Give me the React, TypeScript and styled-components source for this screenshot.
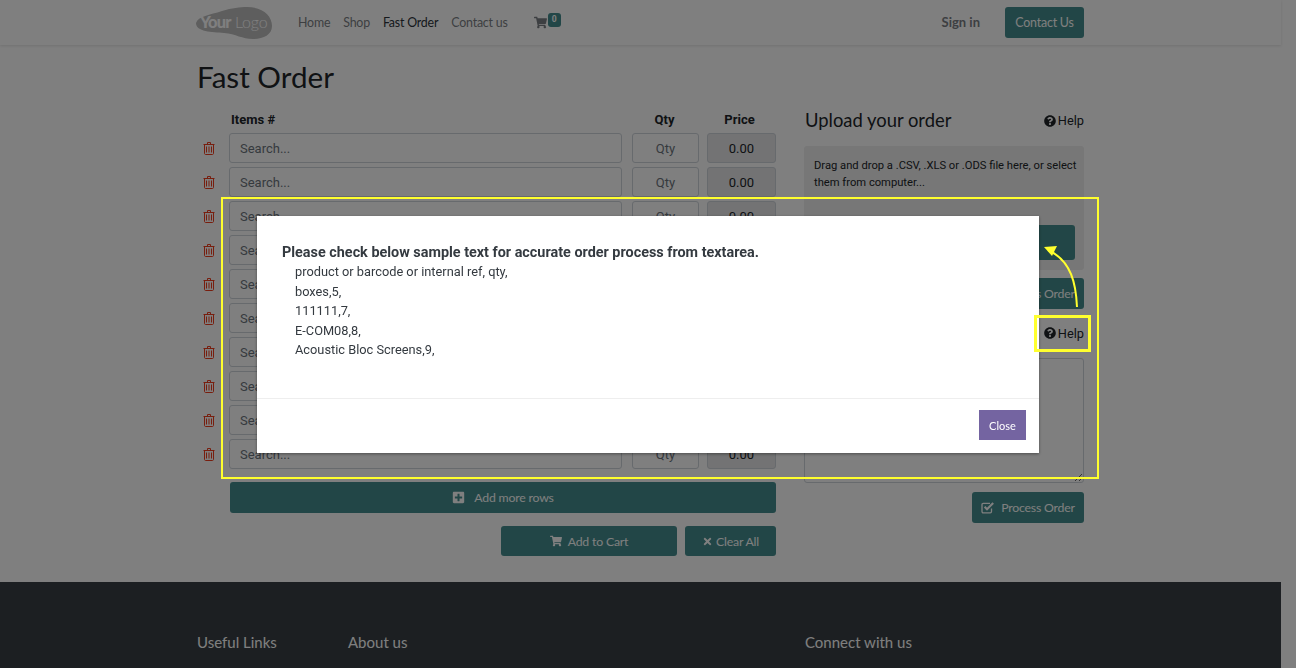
import React from "react";
import styled, { createGlobalStyle } from "styled-components";
import { FaQuestionCircle, FaPlusSquare, FaShoppingCart, FaTimes } from "react-icons/fa";

const HEAD_FONT = `"Lato", "Open Sans", sans-serif`;
const BODY_FONT = `"Roboto", "Liberation Sans", sans-serif`;
const TEAL = "#458d8e";

const rows = Array.from({ length: 10 }, (_, i) => i);

export default function App() {
  return (
    <>
      <GlobalStyle />
      <Page>
        <Header>
          <Container>
            <HeaderInner>
              <Logo />
              <NavLinks>
                <NavLink>Home</NavLink>
                <NavLink>Shop</NavLink>
                <NavLink $active>Fast Order</NavLink>
                <NavLink>Contact us</NavLink>
              </NavLinks>
              <CartLink>
                <FaShoppingCart size={13} />
                <CartBadge>0</CartBadge>
              </CartLink>
              <SignIn>Sign in</SignIn>
              <ContactButton>Contact Us</ContactButton>
            </HeaderInner>
          </Container>
        </Header>

        <Container>
          <Title>Fast Order</Title>
          <Columns>
            <section>
              <ItemHead>
                <span />
                <ColumnLabel $indent>Items #</ColumnLabel>
                <ColumnLabel $shift={1}>Qty</ColumnLabel>
                <ColumnLabel $shift={3}>Price</ColumnLabel>
              </ItemHead>
              {rows.map((r) => (
                <ItemRow key={r}>
                  <TrashIcon />
                  <Field placeholder="Search..." />
                  <Field $center placeholder="Qty" />
                  <PriceField readOnly value="0.00" />
                </ItemRow>
              ))}
              <AddRows>
                <FaPlusSquare size={13} />
                Add more rows
              </AddRows>
              <ActionRow>
                <TealButton $width={176} $height={30}>
                  <FaShoppingCart size={12} />
                  Add to Cart
                </TealButton>
                <TealButton $width={91} $height={30} $gap={3}>
                  <FaTimes size={11} />
                  Clear All
                </TealButton>
              </ActionRow>
            </section>

            <section>
              <SideHeading>
                <SideTitle>Upload your order</SideTitle>
                <HelpLink>
                  <FaQuestionCircle size={12} />
                  Help
                </HelpLink>
              </SideHeading>
              <DropBox>
                Drag and drop a .CSV, .XLS or .ODS file here, or select them from computer...
                <DropButton />
              </DropBox>
              <RightAlign $top={8}>
                <TealButton $width={112} $height={31}>
                  <CheckIcon />
                  Process Order
                </TealButton>
              </RightAlign>
              <HelpRow>
                <HelpLink>
                  <FaQuestionCircle size={12} />
                  Help
                </HelpLink>
              </HelpRow>
              <OrderText />
              <RightAlign $top={9}>
                <TealButton $width={112} $height={31}>
                  <CheckIcon />
                  Process Order
                </TealButton>
              </RightAlign>
            </section>
          </Columns>
        </Container>

        <Footer>
          <Container>
            <FooterGrid>
              <FooterHeading>Useful Links</FooterHeading>
              <FooterHeading>About us</FooterHeading>
              <FooterHeading>Connect with us</FooterHeading>
            </FooterGrid>
          </Container>
        </Footer>
      </Page>

      <Backdrop />

      <Modal>
        <ModalBody>
          <ModalHeading>Please check below sample text for accurate order process from textarea.</ModalHeading>
          <SampleLines>
            <div>product or barcode or internal ref, qty,</div>
            <div>boxes,5,</div>
            <div>111111,7,</div>
            <div>E-COM08,8,</div>
            <div>Acoustic Bloc Screens,9,</div>
          </SampleLines>
        </ModalBody>
        <ModalFooter>
          <CloseButton>Close</CloseButton>
        </ModalFooter>
      </Modal>

      <HighlightBox />
      <HelpHighlight />
      <Arrow width="40" height="66" viewBox="0 0 40 66" fill="none">
        <path d="M33 62C32 40 28 16 4 5" stroke="#ffff2e" strokeWidth="2" />
        <path d="M0 2L13 1L8 11Z" fill="#ffff2e" />
      </Arrow>
    </>
  );
}

function Logo() {
  return (
    <LogoSvg width="78" height="34" viewBox="0 0 78 34">
      <path
        d="M0 17C2 10 14 9 26 5C36 2 44 1 51 1C66 1 76 9 76 20C76 29 67 33 57 33C46 33 40 28 28 27C16 26 0 26 0 17Z"
        fill="#bcbcbc"
      />
      <text x="4" y="22" fontFamily={HEAD_FONT} fontSize="16.5" fontWeight="900" fill="#fff" letterSpacing="-0.9">
        Your
      </text>
      <text x="39" y="22" fontFamily={HEAD_FONT} fontSize="16" fontWeight="300" fill="#fff" letterSpacing="-0.2">
        Logo
      </text>
    </LogoSvg>
  );
}

function TrashIcon() {
  return (
    <TrashSvg width="12" height="13" viewBox="0 0 12 13" fill="none" stroke="#f03c1c">
      <path d="M0.5 2.5H11.5M4.5 2.5V0.5H7.5V2.5M1.5 2.5V11.5C1.5 12 2 12.5 2.5 12.5H9.5C10 12.5 10.5 12 10.5 11.5V2.5" />
      <path d="M3.5 4.5V10.5M6 4.5V10.5M8.5 4.5V10.5" />
    </TrashSvg>
  );
}

function CheckIcon() {
  return (
    <svg width="14" height="13" viewBox="0 0 14 13" fill="none" stroke="currentColor">
      <path d="M10.5 7.5V10.5C10.5 11.3 10 11.8 9.2 11.8H2.3C1.5 11.8 1 11.3 1 10.5V3.6C1 2.8 1.5 2.3 2.3 2.3H9" strokeWidth="1.3" />
      <path d="M3.6 5.8L6 8.2L12.2 2" strokeWidth="2.1" />
    </svg>
  );
}

const GlobalStyle = createGlobalStyle`
  html, body {
    margin: 0;
    height: 100%;
    overflow: hidden;
    background: #fff;
  }
  body {
    font-family: ${BODY_FONT};
    font-size: 13px;
    color: #212529;
  }
  * {
    box-sizing: border-box;
  }
`;

const Page = styled.div`
  width: 1281px;
`;

const Container = styled.div`
  width: 917px;
  margin: 0 auto;
  padding: 0 15px;
`;

const Header = styled.header`
  height: 45px;
  background: #fff;
  box-shadow: 0 1px 3px rgba(0, 0, 0, 0.12);
`;

const HeaderInner = styled.div`
  height: 45px;
  display: flex;
  align-items: center;
  font-family: ${HEAD_FONT};
  font-size: 12.4px;
  letter-spacing: -0.2px;
`;

const LogoSvg = styled.svg`
  flex: none;
  margin-left: -1px;
`;

const NavLinks = styled.nav`
  display: flex;
  gap: 13px;
  margin-left: 24px;
`;

const NavLink = styled.a<{ $active?: boolean }>`
  color: ${({ $active }) => ($active ? "#2c333a" : "#7b7f84")};
  white-space: nowrap;
`;

const CartLink = styled.a`
  position: relative;
  display: flex;
  margin-left: 26px;
  color: #7b7f84;
`;

const CartBadge = styled.span`
  position: absolute;
  left: 14px;
  top: -3px;
  width: 13px;
  height: 14px;
  border-radius: 3px;
  background: ${TEAL};
  color: #fff;
  font-family: ${BODY_FONT};
  font-size: 8.5px;
  font-weight: 700;
  letter-spacing: 0;
  line-height: 13px;
  text-align: center;
`;

const SignIn = styled.a`
  margin-left: auto;
  margin-bottom: 1px;
  color: #7b7f84;
  font-size: 13px;
  font-weight: 700;
  letter-spacing: 0;
`;

const ContactButton = styled.a`
  width: 79px;
  height: 31px;
  margin-left: 25px;
  border-radius: 3px;
  background: ${TEAL};
  color: #fff;
  line-height: 31px;
  text-align: center;
`;

const Title = styled.h1`
  margin: 12px 0 13px;
  font-family: ${HEAD_FONT};
  font-size: 29.6px;
  font-weight: 400;
  line-height: 40px;
  color: #212529;
`;

const Columns = styled.div`
  display: grid;
  grid-template-columns: 579px 280px;
  column-gap: 28px;
  padding-bottom: 26px;
`;

const ItemRow = styled.div`
  display: grid;
  grid-template-columns: 32px 393px 77px 77px;
  align-items: center;
  height: 34px;
  padding-bottom: 4px;
`;

const ItemHead = styled(ItemRow)`
  height: 23px;
`;

const ColumnLabel = styled.div<{ $indent?: boolean; $shift?: number }>`
  justify-self: ${({ $indent }) => ($indent ? "start" : "end")};
  width: ${({ $indent }) => ($indent ? "auto" : "67px")};
  margin-right: ${({ $shift }) => $shift ?? 0}px;
  padding-left: ${({ $indent }) => ($indent ? "2px" : "0")};
  font-size: 13px;
  font-weight: 700;
  text-align: center;
`;

const TrashSvg = styled.svg`
  margin-left: 6px;
`;

const Field = styled.input<{ $center?: boolean }>`
  justify-self: end;
  height: 30px;
  width: ${({ $center }) => ($center ? "67px" : "100%")};
  padding: 0 10px;
  border: 1px solid #ced4da;
  border-radius: 3px;
  background: #fff;
  font-family: ${BODY_FONT};
  font-size: 13px;
  color: #495057;
  text-align: ${({ $center }) => ($center ? "center" : "left")};
  outline: none;

  &::placeholder {
    color: #6c757d;
    opacity: 1;
  }
`;

const PriceField = styled.input`
  justify-self: end;
  height: 30px;
  width: 69px;
  border: 1px solid #ced4da;
  border-radius: 3px;
  background: #e6e7e8;
  font-family: ${BODY_FONT};
  font-size: 13px;
  color: #212529;
  text-align: center;
  outline: none;
`;

const TealButton = styled.button<{ $width: number; $height: number; $gap?: number }>`
  display: inline-flex;
  align-items: center;
  justify-content: center;
  gap: ${({ $gap }) => $gap ?? 6}px;
  width: ${({ $width }) => $width}px;
  height: ${({ $height }) => $height}px;
  padding: 0;
  border: none;
  border-radius: 3px;
  background: ${TEAL};
  color: #fff;
  font-family: ${HEAD_FONT};
  font-size: 12.3px;
  letter-spacing: -0.2px;
`;

const AddRows = styled(TealButton).attrs({ $width: 546, $height: 31, $gap: 9 })`
  display: flex;
  margin: 9px 0 0 33px;
`;

const ActionRow = styled.div`
  display: flex;
  justify-content: flex-end;
  gap: 8px;
  margin-top: 13px;
`;

const SideHeading = styled.div`
  display: flex;
  align-items: center;
  justify-content: space-between;
  height: 26px;
  margin: -3px 0 13px 1px;
`;

const SideTitle = styled.h3`
  margin: 0;
  font-family: ${HEAD_FONT};
  font-size: 18.4px;
  font-weight: 400;
  color: #212529;
`;

const HelpLink = styled.a`
  display: inline-flex;
  align-items: center;
  gap: 2px;
  padding-top: 1px;
  font-size: 12.8px;
  color: #212529;
`;

const DropBox = styled.div`
  display: flex;
  flex-direction: column;
  height: 124px;
  padding: 11px 0 10px 10px;
  border-radius: 3px;
  background: #eeeeee;
  font-size: 11.2px;
  line-height: 17px;
  color: #212529;
`;

const DropButton = styled.div`
  height: 35px;
  margin: 34px 9px 0 0;
  border-radius: 3px;
  background: ${TEAL};
`;

const RightAlign = styled.div<{ $top: number }>`
  display: flex;
  justify-content: flex-end;
  margin-top: ${({ $top }) => $top}px;
`;

const HelpRow = styled.div`
  display: flex;
  justify-content: flex-end;
  align-items: center;
  height: 49px;
  padding-bottom: 2px;
`;

const OrderText = styled.textarea`
  display: block;
  width: 100%;
  height: 125px;
  margin: 0;
  border: 1px solid #ced4da;
  border-radius: 3px;
  background: #fff;
  resize: vertical;
`;

const Footer = styled.footer`
  height: 200px;
  background: #383f44;
`;

const FooterGrid = styled.div`
  display: grid;
  grid-template-columns: 151px 457px 1fr;
  padding-top: 50px;
`;

const FooterHeading = styled.h5`
  margin: 0;
  font-family: ${HEAD_FONT};
  font-size: 15px;
  font-weight: 400;
  line-height: 20px;
  color: #fff;
`;

const Backdrop = styled.div`
  position: fixed;
  inset: 0;
  background: rgba(0, 0, 0, 0.5);
`;

const HighlightBox = styled.div`
  position: fixed;
  left: 221px;
  top: 197px;
  width: 878px;
  height: 282px;
  border: 2px solid #ffff2e;
`;

const HelpHighlight = styled.div`
  position: fixed;
  left: 1034px;
  top: 315px;
  width: 57px;
  height: 37px;
  border: 3px solid #ffff2e;
`;

const Modal = styled.div`
  position: fixed;
  left: 257px;
  top: 216px;
  width: 782px;
  height: 237px;
  display: flex;
  flex-direction: column;
  background: #fff;
  box-shadow: 0 1px 3px rgba(0, 0, 0, 0.4);
`;

const ModalBody = styled.div`
  flex: 1;
  padding: 28px 25px 0;
  border-bottom: 1px solid #eeeeee;
`;

const ModalHeading = styled.div`
  font-size: 14.4px;
  font-weight: 700;
  line-height: 18px;
  color: #343a40;
`;

const SampleLines = styled.div`
  padding: 0 0 0 13px;
  font-size: 12.8px;
  line-height: 19.5px;
  color: #343a40;
`;

const ModalFooter = styled.div`
  display: flex;
  flex: none;
  justify-content: flex-end;
  height: 54px;
  padding: 11px 13px 0 0;
`;

const CloseButton = styled.button`
  width: 47px;
  height: 30px;
  padding: 0;
  border: none;
  background: #7464a1;
  color: #fff;
  font-family: ${HEAD_FONT};
  font-size: 11px;
`;

const Arrow = styled.svg`
  position: fixed;
  left: 1044px;
  top: 245px;
`;
